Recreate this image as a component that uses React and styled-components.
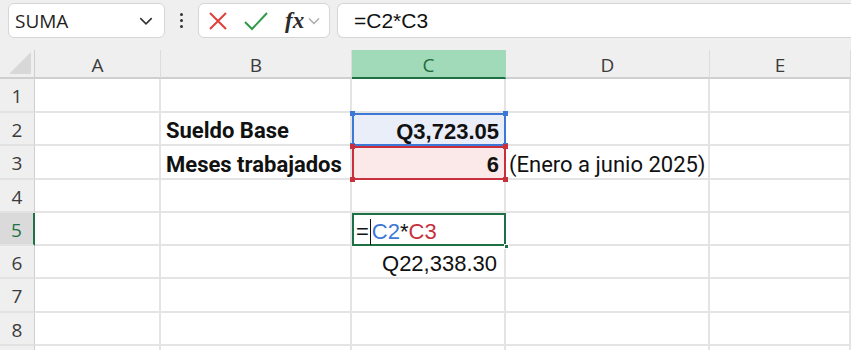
import React from "react";
import styled, { createGlobalStyle } from "styled-components";

const GlobalStyle = createGlobalStyle`
  html, body {
    margin: 0;
    padding: 0;
    background: #efefef;
    overflow: hidden;
  }
  * {
    box-sizing: border-box;
  }
`;

const Window = styled.div`
  width: 851px;
  height: 350px;
  background: #efefef;
  overflow: hidden;
`;

const Toolbar = styled.div`
  height: 50px;
  display: flex;
  align-items: flex-start;
  padding: 3px 0 0 8px;
`;

const Box = styled.div`
  height: 35px;
  display: flex;
  align-items: center;
  background: #ffffff;
  border: 1px solid #d6d6d6;
  border-radius: 6px;
`;

const NameBox = styled(Box)`
  width: 157px;
  justify-content: space-between;
  padding: 0 10px 0 6px;
  font-family: "Open Sans", "Noto Sans", sans-serif;
  font-size: 19px;
  color: #1f1f1f;
`;

const Dots = styled.div`
  width: 33px;
  height: 35px;
  display: flex;
  flex-direction: column;
  align-items: center;
  justify-content: center;
  gap: 3px;

  span {
    width: 3px;
    height: 3px;
    border-radius: 50%;
    background: #333;
  }
`;

const FxBox = styled(Box)`
  width: 132px;
  padding: 0 6px 0 8px;
  gap: 14px;
`;

const FxGroup = styled.div`
  display: flex;
  align-items: center;
  gap: 3px;
`;

const Fx = styled.span`
  font-family: "Liberation Serif", "DejaVu Serif", serif;
  font-style: italic;
  font-weight: bold;
  font-size: 23px;
  color: #2b2b2b;
  margin-left: 2px;
`;

const FormulaBox = styled(Box)`
  flex: 1;
  margin-left: 7px;
  border-right: none;
  border-radius: 6px 0 0 6px;
  padding-left: 16px;
  font-family: "Liberation Sans", Arial, sans-serif;
  font-size: 21px;
  color: #111;
`;

const Sheet = styled.div`
  display: grid;
  grid-template-columns: 35px 126px 191px 154px 204px 141px;
  background: #ffffff;
`;

const Corner = styled.div`
  height: 29px;
  background: #efefef;
  border-right: 1px solid #cfcfcf;
  border-bottom: 2px solid #cfcfcf;
  position: relative;

  &::after {
    content: "";
    position: absolute;
    right: 3px;
    bottom: 3px;
    width: 0;
    height: 0;
    border-left: 22px solid transparent;
    border-bottom: 22px solid #d8d8d8;
  }
`;

const ColHead = styled.div`
  height: 29px;
  display: flex;
  align-items: center;
  justify-content: center;
  padding-top: 2px;
  font-family: "Open Sans", "Noto Sans", sans-serif;
  font-size: 19px;
  color: ${(p) => (p.$active ? "#1e6b41" : "#3b3b3b")};
  background: ${(p) => (p.$active ? "#a1dab9" : "#efefef")};
  border-right: 1px solid ${(p) => (p.$active ? "#a1dab9" : "#dcdcdc")};
  border-bottom: 2px solid ${(p) => (p.$active ? "#1e7145" : "#cfcfcf")};
`;

const RowHead = styled.div`
  height: ${(p) => p.$h}px;
  display: flex;
  align-items: center;
  justify-content: center;
  padding-top: 2px;
  font-family: "Open Sans", "Noto Sans", sans-serif;
  font-size: 19px;
  color: ${(p) => (p.$active ? "#1e7145" : "#3b3b3b")};
  background: ${(p) => (p.$active ? "#dadada" : "#efefef")};
  border-right: ${(p) => (p.$active ? "2px solid #1e7145" : "1px solid #cfcfcf")};
  border-bottom: 2px solid #e2e2e2;
`;

const Cell = styled.div`
  height: ${(p) => p.$h}px;
  display: flex;
  align-items: center;
  justify-content: ${(p) => (p.$right ? "flex-end" : "flex-start")};
  padding: 4px 5px 0;
  border-right: 2px solid #e4e4e4;
  border-bottom: 2px solid #e4e4e4;
  white-space: nowrap;
  overflow: visible;
  position: relative;
  font-family: "Roboto", "Noto Sans", sans-serif;
  font-size: 22px;
  color: #111;
`;

const NoteCell = styled(Cell)`
  padding-left: 3px;
`;

const LabelCell = styled(Cell)`
  font-weight: bold;
  font-size: 22px;
`;

const NumCell = styled(Cell)`
  font-family: "Liberation Sans", Arial, sans-serif;
  font-size: 22px;
  font-weight: ${(p) => (p.$bold ? "bold" : "normal")};
  padding-right: 7px;
`;

const RefCell = styled(NumCell)`
  background: ${(p) => p.$bg};
  border: none;
  box-shadow: inset 0 0 0 2px ${(p) => p.$line};
  z-index: 2;
`;

const Handle = styled.i`
  position: absolute;
  width: 5px;
  height: 5px;
  background: ${(p) => p.$color};
  ${(p) => (p.$top ? "top: -2px;" : "bottom: -2px;")}
  ${(p) => (p.$left ? "left: -2px;" : "right: -2px;")}
`;

const EditCell = styled(Cell)`
  border: none;
  box-shadow: inset 0 0 0 2px #1e7145;
  z-index: 2;
  padding-left: 4px;
  font-family: "Liberation Sans", Arial, sans-serif;
  font-size: 22px;
`;

const Caret = styled.span`
  display: inline-block;
  width: 1px;
  height: 26px;
  background: #111;
  margin: 0 1px;
`;

const Ref = styled.span`
  color: ${(p) => p.$color};
`;

const FillHandle = styled.i`
  position: absolute;
  right: -3px;
  bottom: -3px;
  width: 5px;
  height: 5px;
  background: #1e7145;
  border: 1px solid #fff;
`;

const rowHeights = [34, 33, 34, 33, 33, 33, 34, 33, 40];

const Corners = ({ color }) => (
  <>
    <Handle $color={color} $top $left />
    <Handle $color={color} $top />
    <Handle $color={color} $left />
    <Handle $color={color} />
  </>
);

const XIcon = () => (
  <svg width="22" height="22" viewBox="0 0 22 22">
    <path d="M3 3 L19 19 M19 3 L3 19" stroke="#e0403a" strokeWidth="2" fill="none" />
  </svg>
);

const CheckIcon = () => (
  <svg width="26" height="22" viewBox="0 0 26 22">
    <path d="M2 12 L9 19 L24 3" stroke="#2e9a4b" strokeWidth="2" fill="none" />
  </svg>
);

const Chevron = ({ size = 14, color = "#333" }) => (
  <svg width={size} height={size} viewBox="0 0 14 14">
    <path d="M2 4.5 L7 9.5 L12 4.5" stroke={color} strokeWidth="1.4" fill="none" />
  </svg>
);

export default function App() {
  const cols = ["A", "B", "C", "D", "E"];
  const rows = [1, 2, 3, 4, 5, 6, 7, 8, 9];

  const renderRow = (r, i) => {
    const h = rowHeights[i];
    const cells = [];
    cells.push(
      <RowHead key={`h${r}`} $h={h} $active={r === 5}>
        {r < 9 ? r : ""}
      </RowHead>
    );
    cols.forEach((c) => {
      const key = `${c}${r}`;
      if (key === "B2") {
        cells.push(<LabelCell key={key} $h={h}>Sueldo Base</LabelCell>);
      } else if (key === "B3") {
        cells.push(<LabelCell key={key} $h={h}>Meses trabajados</LabelCell>);
      } else if (key === "C2") {
        cells.push(
          <RefCell key={key} $h={h} $right $bold $bg="#e9eef8" $line="#3d78d6">
            Q3,723.05
            <Corners color="#3d78d6" />
          </RefCell>
        );
      } else if (key === "C3") {
        cells.push(
          <RefCell key={key} $h={h} $right $bold $bg="#fbe8e8" $line="#c8303d">
            6
            <Corners color="#c8303d" />
          </RefCell>
        );
      } else if (key === "D3") {
        cells.push(
          <NoteCell key={key} $h={h}>
            (Enero a junio 2025)
          </NoteCell>
        );
      } else if (key === "C5") {
        cells.push(
          <EditCell key={key} $h={h}>
            =<Caret />
            <Ref $color="#3d78d6">C2</Ref>*<Ref $color="#c8303d">C3</Ref>
            <FillHandle />
          </EditCell>
        );
      } else if (key === "C6") {
        cells.push(
          <NumCell key={key} $h={h} $right>
            Q22,338.30
          </NumCell>
        );
      } else {
        cells.push(<Cell key={key} $h={h} />);
      }
    });
    return cells;
  };

  return (
    <Window>
      <GlobalStyle />
      <Toolbar>
        <NameBox>
          SUMA
          <Chevron size={16} color="#333" />
        </NameBox>
        <Dots>
          <span />
          <span />
          <span />
        </Dots>
        <FxBox>
          <XIcon />
          <CheckIcon />
          <FxGroup>
            <Fx>fx</Fx>
            <Chevron size={14} color="#aaa" />
          </FxGroup>
        </FxBox>
        <FormulaBox>=C2*C3</FormulaBox>
      </Toolbar>
      <Sheet>
        <Corner />
        {cols.map((c) => (
          <ColHead key={c} $active={c === "C"}>
            {c}
          </ColHead>
        ))}
        {rows.map((r, i) => renderRow(r, i))}
      </Sheet>
    </Window>
  );
}
